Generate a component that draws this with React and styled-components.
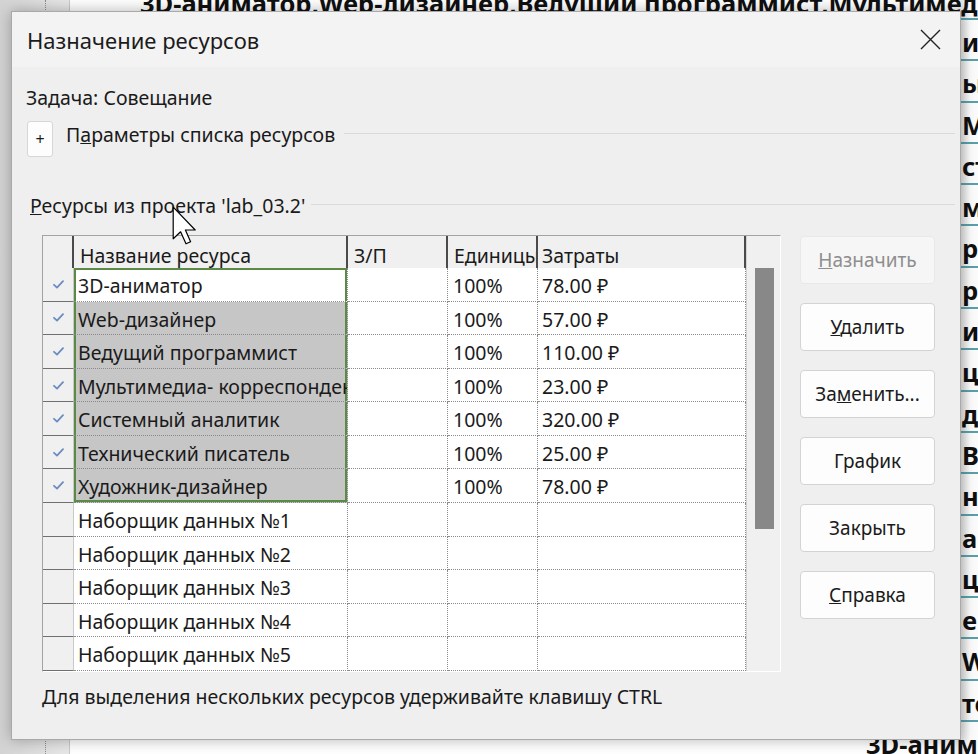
import React from 'react';
import styled, { createGlobalStyle } from 'styled-components';

const GlobalStyle = createGlobalStyle`
    html, body {
        margin: 0;
        padding: 0;
    }

    body {
        width: 978px;
        height: 754px;
        overflow: hidden;
        font-family: 'Noto Sans', 'Open Sans', 'DejaVu Sans', sans-serif;
        color: #1a1a1a;
    }
`;

const Desktop = styled.div`
    position: relative;
    width: 978px;
    height: 754px;
    overflow: hidden;
    display: flex;
    background: #ffffff;
`;

const SidePane = styled.div`
    width: 70px;
    flex-shrink: 0;
    box-sizing: border-box;
    border-right: 1px solid #cacaca;
    background: linear-gradient(90deg, #d3d3d3, #e8e8e8);

    .numbers {
        margin-left: 45px;
        height: 100%;
        border-left: 1px dotted #8c8c8c;
    }
`;

const Sheet = styled.div`
    flex: 1;
    display: flex;
    flex-direction: column;
    overflow: hidden;
    background: linear-gradient(90deg, #ffffff 880px, #e4e4e4 892px, #fbfbfb 900px);
`;

const SheetRow = styled.div`
    flex-shrink: 0;
    height: ${({ h }) => h}px;
    box-sizing: border-box;
    border-bottom: 2px solid #59a0a8;
    padding-left: ${({ indent }) => indent}px;
    font-size: 25.5px;
    font-weight: 700;
    line-height: ${({ lh }) => lh}px;
    white-space: nowrap;
    color: #101010;
`;

const Dialog = styled.div`
    position: absolute;
    left: 11px;
    top: 11px;
    width: 950px;
    height: 729px;
    box-sizing: border-box;
    border: 1px solid #a9a9a9;
    background: #efefef;
    box-shadow: 0 0 14px rgba(0, 0, 0, 0.3);
    display: flex;
    flex-direction: column;
`;

const TitleBar = styled.div`
    height: 55px;
    flex-shrink: 0;
    display: flex;
    align-items: center;
    padding: 0 19px 0 15px;
    background: #f3f3f3;

    h1 {
        margin: 0;
        font-size: 22px;
        font-weight: 400;
        color: #1b1b1b;
    }

    svg {
        margin-left: auto;
        width: 21px;
        height: 21px;
    }
`;

const Body = styled.div`
    flex: 1;
    display: flex;
    flex-direction: column;
    padding: 0 5px 0 14px;
`;

const TaskLine = styled.div`
    margin-top: 19px;
    font-size: 19.5px;
    line-height: 24px;
`;

const ExpanderRow = styled.div`
    margin-top: 11px;
    height: 36px;
    display: flex;
    align-items: flex-start;

    .toggle {
        margin-left: 1px;
        width: 26px;
        height: 36px;
        box-sizing: border-box;
        border: 1px solid #d6d6d6;
        border-radius: 3px;
        background: #fdfdfd;
        display: grid;
        place-items: center;
        font-size: 16px;
    }

    .label {
        margin-left: 13px;
        font-size: 19.5px;
        line-height: 28px;
    }
`;

const Rule = styled.div`
    flex: 1;
    height: 1px;
    background: #dadada;
    margin-top: ${({ top }) => top}px;
    margin-left: ${({ left }) => left}px;
`;

const SectionHead = styled.div`
    margin-top: 37px;
    display: flex;
    align-items: flex-start;

    .label {
        margin-left: 4px;
        font-size: 19.5px;
        line-height: 24px;
    }
`;

const Main = styled.div`
    margin-top: 17px;
    margin-left: 16px;
    display: flex;
    align-items: flex-start;
`;

const TableFrame = styled.div`
    width: 739px;
    height: 437px;
    box-sizing: border-box;
    border-top: 1px solid #a3a3a3;
    border-left: 1px solid #a3a3a3;
    border-right: 1px solid #ffffff;
    border-bottom: 1px solid #ffffff;
    display: flex;
    background: #f0f0f0;
`;

const Grid = styled.div`
    width: 703px;
    display: grid;
    grid-template-columns: 31px 274px 100px 90px 208px;
    grid-template-rows: 32px repeat(12, 33.58px);
    background: #ffffff;
`;

const HeadCell = styled.div`
    box-sizing: border-box;
    background: #f0f0f0;
    border-right: 2px solid #4a4a4a;
    padding: 8px 0 0 ${({ pad }) => pad || 0}px;
    font-size: 19.5px;
    line-height: 24px;
    white-space: nowrap;
    overflow: hidden;
`;

const SelCell = styled.div`
    box-sizing: border-box;
    background: #f0f0f0;
    border-bottom: 1px solid #707070;
    border-right: 1px solid #c9c9c9;
    display: grid;
    place-items: center;

    svg {
        width: 11px;
        height: 9px;
    }
`;

const Cell = styled.div`
    box-sizing: border-box;
    background: ${({ selected }) => selected ? '#c6c6c6' : '#ffffff'};
    border-bottom: 1px dotted #8a8a8a;
    border-right: 1px dotted #8a8a8a;
    padding-left: ${({ pad }) => pad || 4}px;
    font-size: 19.5px;
    line-height: 35px;
    white-space: nowrap;
    overflow: hidden;
    box-shadow: ${({ frame }) => frame ? [
        'inset 2px 0 #5b8a47',
        'inset -2px 0 #5b8a47',
        frame.first ? 'inset 0 2px #5b8a47' : null,
        frame.last ? 'inset 0 -2px #5b8a47' : null,
    ].filter(Boolean).join(', ') : 'none'};
`;

const Track = styled.div`
    flex: 1;
    box-sizing: border-box;
    border-left: 1px solid #d2d2d2;
    padding: 32px 0 0 8px;

    .thumb {
        width: 19px;
        height: 261px;
        background: #888888;
    }
`;

const Buttons = styled.div`
    margin-left: 19px;
    margin-top: 1px;
    display: flex;
    flex-direction: column;
    gap: 19px;
`;

const Button = styled.button`
    width: 135px;
    height: 48px;
    box-sizing: border-box;
    border: 1px solid ${({ disabled }) => disabled ? '#e8e8e8' : '#d3d3d3'};
    border-radius: 4px;
    background: ${({ disabled }) => disabled ? '#f6f6f6' : '#fdfdfd'};
    color: ${({ disabled }) => disabled ? '#8e8e8e' : '#1b1b1b'};
    font-family: inherit;
    font-size: 19px;
    padding: 0;
`;

const Footer = styled.div`
    margin-top: 13px;
    margin-left: 16px;
    font-size: 19.5px;
    line-height: 24px;
`;

const Cursor = styled.svg`
    position: absolute;
    left: 172px;
    top: 206px;
    width: 25px;
    height: 40px;
`;

const fragments = ['им', 'ы', 'М', 'ст', 'м', 'ра', 'ро', 'и', 'ц', 'ду', 'В', 'не', 'а', 'ц', 'eb', 'W', 'то'];

const resources = [
    { name: '3D-аниматор', units: '100%', cost: '78.00 ₽', on: true },
    { name: 'Web-дизайнер', units: '100%', cost: '57.00 ₽', on: true },
    { name: 'Ведущий программист', units: '100%', cost: '110.00 ₽', on: true },
    { name: 'Мультимедиа- корреспондент', units: '100%', cost: '23.00 ₽', on: true },
    { name: 'Системный аналитик', units: '100%', cost: '320.00 ₽', on: true },
    { name: 'Технический писатель', units: '100%', cost: '25.00 ₽', on: true },
    { name: 'Художник-дизайнер', units: '100%', cost: '78.00 ₽', on: true },
    { name: 'Наборщик данных №1' },
    { name: 'Наборщик данных №2' },
    { name: 'Наборщик данных №3' },
    { name: 'Наборщик данных №4' },
    { name: 'Наборщик данных №5' },
];

const Check = () => (
    <svg viewBox="0 0 11 9">
        <path d="M1 4.8 L4 7.6 L10 1.2" fill="none" stroke="#6a8cc0" strokeWidth="1.8" strokeLinecap="round" strokeLinejoin="round" />
    </svg>
);

const App = () => {
    const last = resources.filter(r => r.on).length - 1;

    return (
        <>
            <GlobalStyle />
            <Desktop>
                <SidePane><div className="numbers" /></SidePane>
                <Sheet>
                    <SheetRow h={20} lh={6} indent={70}>3D-аниматор,Web-дизайнер,Ведущий программист,Мультимедиа- корреспондент</SheetRow>
                    {
                        fragments.map((f, i) => (
                            <SheetRow key={i} h={41.3} lh={44} indent={892}>{f}</SheetRow>
                        ))
                    }
                    <SheetRow h={41.3} lh={44} indent={796}>3D-аниматор</SheetRow>
                </Sheet>

                <Dialog>
                    <TitleBar>
                        <h1>Назначение ресурсов</h1>
                        <svg viewBox="0 0 21 21">
                            <path d="M1 1 L20 20 M20 1 L1 20" stroke="#222" strokeWidth="1.4" fill="none" />
                        </svg>
                    </TitleBar>
                    <Body>
                        <TaskLine>Задача: Совещание</TaskLine>
                        <ExpanderRow>
                            <div className="toggle">+</div>
                            <span className="label">П<u>а</u>раметры списка ресурсов</span>
                            <Rule top={12} left={9} />
                        </ExpanderRow>
                        <SectionHead>
                            <span className="label"><u>Р</u>есурсы из проекта 'lab_03.2'</span>
                            <Rule top={10} left={6} />
                        </SectionHead>
                        <Main>
                            <TableFrame>
                                <Grid>
                                    <HeadCell />
                                    <HeadCell pad={6}>Название ресурса</HeadCell>
                                    <HeadCell pad={6}>З/П</HeadCell>
                                    <HeadCell pad={6}>Единицы</HeadCell>
                                    <HeadCell pad={4}>Затраты</HeadCell>
                                    {
                                        resources.map((r, i) => (
                                            <React.Fragment key={r.name}>
                                                <SelCell>{r.on && <Check />}</SelCell>
                                                <Cell
                                                    selected={r.on && i > 0}
                                                    frame={r.on ? { first: i === 0, last: i === last } : null}
                                                >
                                                    {r.name}
                                                </Cell>
                                                <Cell />
                                                <Cell pad={5}>{r.units}</Cell>
                                                <Cell pad={4}>{r.cost}</Cell>
                                            </React.Fragment>
                                        ))
                                    }
                                </Grid>
                                <Track><div className="thumb" /></Track>
                            </TableFrame>
                            <Buttons>
                                <Button disabled><u>Н</u>азначить</Button>
                                <Button><u>У</u>далить</Button>
                                <Button>За<u>м</u>енить...</Button>
                                <Button>График</Button>
                                <Button>Закрыть</Button>
                                <Button><u>С</u>правка</Button>
                            </Buttons>
                        </Main>
                        <Footer>Для выделения нескольких ресурсов удерживайте клавишу CTRL</Footer>
                    </Body>
                </Dialog>

                <Cursor viewBox="0 0 12.5 20">
                    <path d="M0.6 0.6 L0.6 16.4 L4.3 12.9 L7 18.9 L9.3 17.9 L6.7 12 L11.6 12 Z" fill="#ffffff" stroke="#000000" strokeWidth="0.6" strokeLinejoin="round" />
                </Cursor>
            </Desktop>
        </>
    );
};

export default App;
